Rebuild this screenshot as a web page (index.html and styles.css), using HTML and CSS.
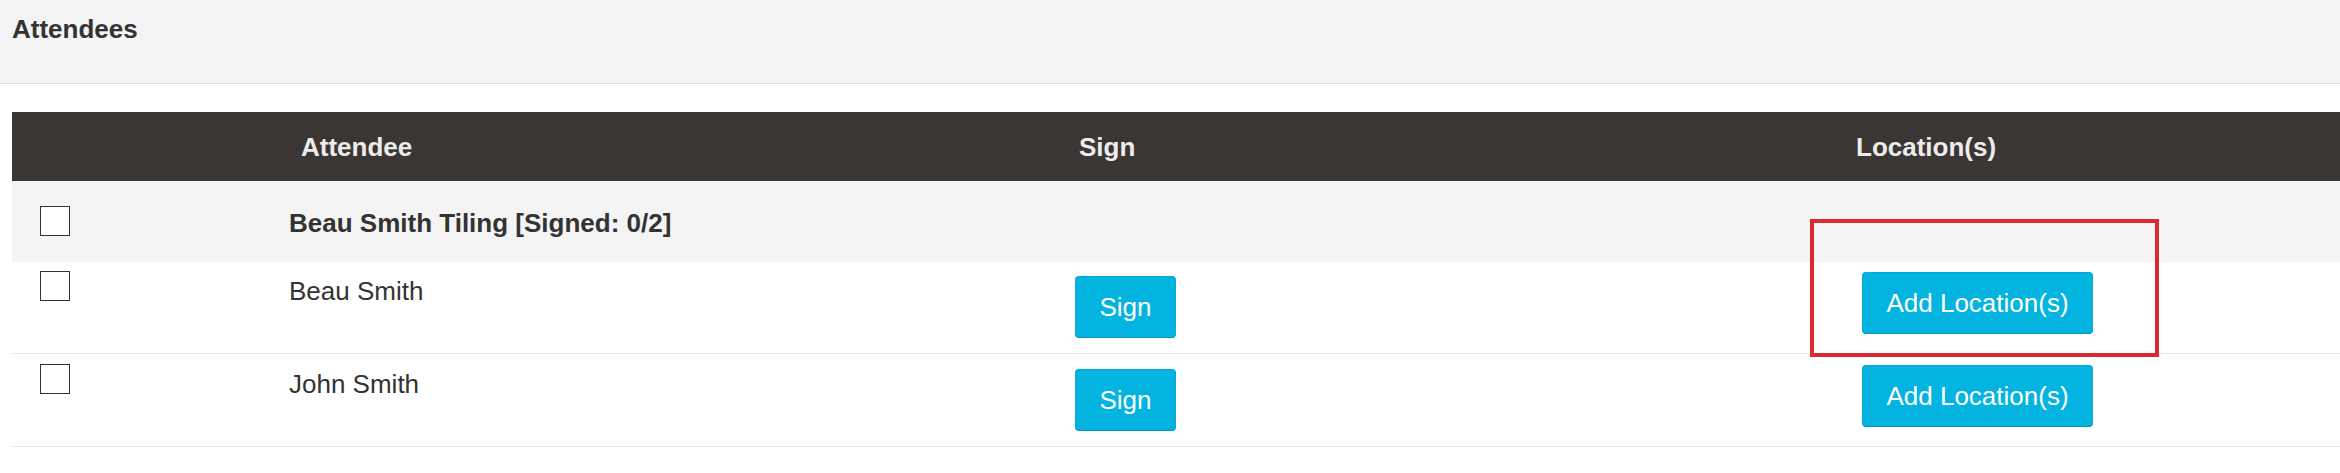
FILE: index.html
```html
<!DOCTYPE html>
<html lang="en">
<head>
<meta charset="utf-8">
<title>Attendees</title>
<link rel="stylesheet" href="styles.css">
</head>
<body>
  <header class="panel-head">
    <h2 class="panel-title">Attendees</h2>
  </header>

  <section class="attendees">
    <div class="row row-head">
      <div class="cell"></div>
      <div class="cell th th-name">Attendee</div>
      <div class="cell th th-sign">Sign</div>
      <div class="cell th th-loc">Location(s)</div>
    </div>

    <div class="row row-group">
      <div class="cell cell-check"><input type="checkbox" class="cb"></div>
      <div class="cell group-name">Beau Smith Tiling [Signed: 0/2]</div>
      <div class="cell"></div>
      <div class="cell"></div>
    </div>

    <div class="row row-person">
      <div class="cell cell-check"><input type="checkbox" class="cb"></div>
      <div class="cell person-name">Beau Smith</div>
      <div class="cell cell-sign"><button class="btn btn-sign">Sign</button></div>
      <div class="cell cell-loc"><button class="btn btn-loc">Add Location(s)</button></div>
    </div>

    <div class="row row-person">
      <div class="cell cell-check"><input type="checkbox" class="cb"></div>
      <div class="cell person-name">John Smith</div>
      <div class="cell cell-sign"><button class="btn btn-sign">Sign</button></div>
      <div class="cell cell-loc"><button class="btn btn-loc">Add Location(s)</button></div>
    </div>

    <div class="highlight" aria-hidden="true"></div>
  </section>
</body>
</html>
```

FILE: styles.css
```css
* {
  box-sizing: border-box;
}

html, body {
  margin: 0;
  padding: 0;
  background: #ffffff;
}

body {
  font-family: "Liberation Sans", Arial, Helvetica, sans-serif;
  font-size: 26px;
  line-height: 30px;
  color: #333333;
}

.panel-head {
  height: 84px;
  background: #f4f4f4;
  border-bottom: 1px solid #dddddd;
  padding: 14px 12px 0;
}

.panel-title {
  margin: 0;
  font-size: 26px;
  line-height: 30px;
  font-weight: bold;
  color: #333333;
}

.attendees {
  position: relative;
  margin: 28px 0 0 12px;
}

.row {
  display: grid;
  grid-template-columns: 276px 787px 775px 1fr;
  align-items: start;
}

.row-head {
  height: 69px;
  background: #3b3633;
  align-items: center;
}

.th {
  font-weight: bold;
  color: #ececec;
}

.th-name {
  padding-left: 13px;
}

.th-sign {
  padding-left: 4px;
}

.th-loc {
  padding-left: 6px;
}

.row-group {
  height: 81px;
  background: #f4f4f4;
  padding-top: 25px;
}

.group-name {
  font-weight: bold;
  padding-left: 1px;
  margin-top: 2px;
}

.row-person {
  height: 92px;
  padding-top: 9px;
  border-bottom: 1px solid #e6e6e6;
}

.row-person + .row-person {
  height: 93px;
  padding-top: 10px;
}

.person-name {
  padding-left: 1px;
  margin-top: 5px;
}

.cell-check {
  padding-left: 28px;
}

.cb {
  -webkit-appearance: none;
  appearance: none;
  display: block;
  width: 30px;
  height: 30px;
  margin: 0;
  border: 1px solid #333333;
  background: #ffffff;
  border-radius: 0;
}

.cell-sign {
  margin-top: 5px;
}

.cell-loc {
  margin-top: 1px;
  padding-left: 12px;
}

.btn {
  display: inline-block;
  height: 62px;
  padding: 0 24px;
  font-family: inherit;
  font-size: 26px;
  line-height: 30px;
  color: #ffffff;
  background: #03b4e1;
  border: 1px solid #05a9d4;
  border-bottom-color: #0494bd;
  border-radius: 4px;
  cursor: pointer;
}

.btn-sign {
  width: 101px;
  padding: 0;
}

.btn-loc {
  width: 231px;
  padding: 0;
}

.highlight {
  position: absolute;
  left: 1798px;
  top: 107px;
  width: 349px;
  height: 138px;
  border: 4px solid #dc2a32;
  pointer-events: none;
}
```
